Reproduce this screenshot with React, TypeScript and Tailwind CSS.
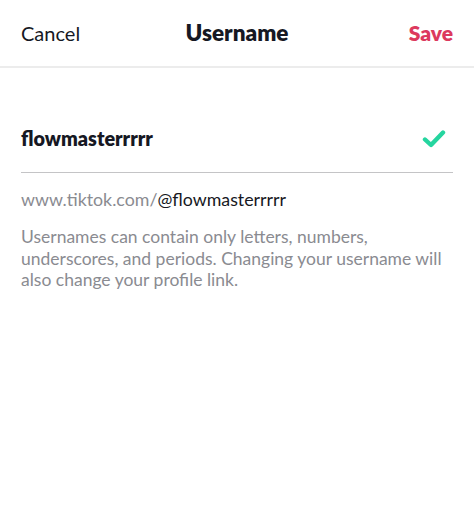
import React from "react";

export default function App() {
  return (
    <div className="w-[474px] h-[515px] bg-white" style={{ fontFamily: "Lato, 'Noto Sans', sans-serif" }}>
      <div className="h-[68px] grid grid-cols-[1fr_auto_1fr] items-center px-[21px] border-b-2 border-[#ececec]">
        <span className="text-[20px] text-[#161823] justify-self-start">Cancel</span>
        <span className="text-[22.5px] font-extrabold text-[#161823]">Username</span>
        <span className="text-[21px] font-extrabold text-[#dc3a5e] justify-self-end">Save</span>
      </div>
      <div className="px-[21px]">
        <div className="h-[105px] flex items-center justify-between border-b border-[#c4c4c6] pt-[38px]">
          <span className="text-[19.8px] font-extrabold text-[#161823]">flowmasterrrrr</span>
          <svg width="24" height="20" viewBox="0 0 24 20" className="mr-[7px]">
            <path d="M3 10.5 L9 16 L21 3.5" fill="none" stroke="#25d59f" strokeWidth="4.4" strokeLinecap="round" strokeLinejoin="round" />
          </svg>
        </div>
        <div className="mt-[14px] text-[17.8px] leading-[24px]">
          <span className="text-[#8a8b91]">www.tiktok.com/</span>
          <span className="text-[#161823]">@flowmasterrrrr</span>
        </div>
        <p className="mt-[15px] text-[17.5px] leading-[21.5px] text-[#8a8b91]">
          Usernames can contain only letters, numbers, underscores, and periods. Changing your username will also change your profile link.
        </p>
      </div>
    </div>
  );
}
